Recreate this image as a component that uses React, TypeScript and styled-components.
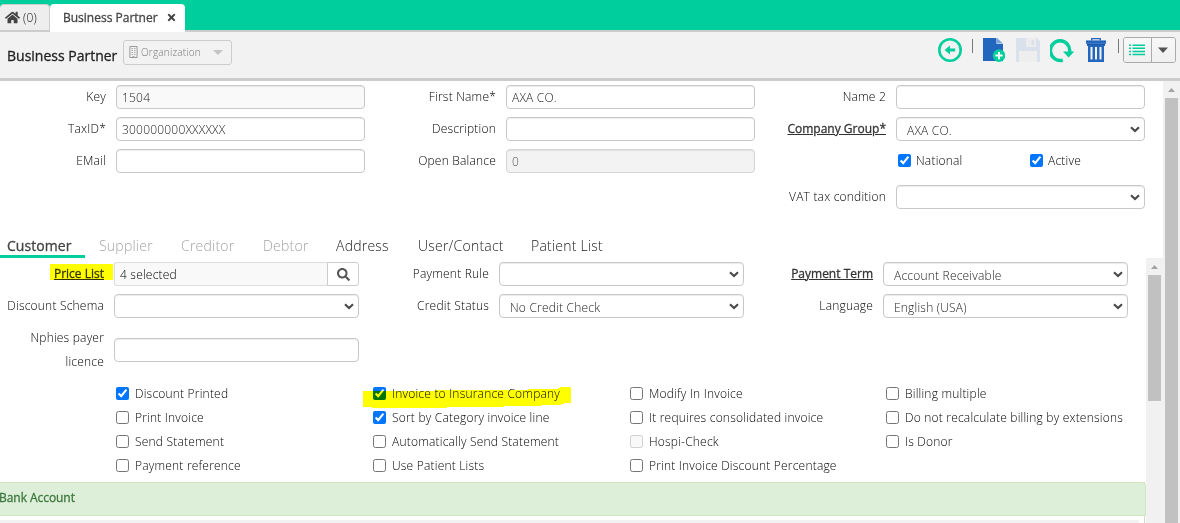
import React from "react";
import styled, { createGlobalStyle, css } from "styled-components";
import { FaHome, FaTimes, FaSearch } from "react-icons/fa";

const Global = createGlobalStyle`
  * { box-sizing: border-box; }
  html, body { margin: 0; padding: 0; height: 100%; overflow: hidden; }
  #root { height: 100%; }
  body, input, select, button {
    font-family: "Open Sans", "Noto Sans", sans-serif;
    font-weight: 300;
    font-size: 12px;
    letter-spacing: 0.2px;
    color: #000;
  }
`;

const heavy = css`
  font-weight: 400;
  -webkit-text-stroke: 0.3px currentColor;
`;

const Page = styled.div`
  display: flex;
  flex-direction: column;
  height: 523px;
  width: 1180px;
  overflow: hidden;
  background: #fff;
`;

/* window tabs */
const TabBar = styled.nav`
  display: flex;
  align-items: flex-end;
  flex: none;
  height: 32px;
  padding-top: 4px;
  background: linear-gradient(#00ce9c 30px, #ccc 30px);
`;

const WindowTab = styled.div<{ $active?: boolean }>`
  display: flex;
  align-items: center;
  border-radius: 4px 4px 0 0;
  white-space: nowrap;
  ${(p) =>
    p.$active
      ? css`
          width: 135px;
          height: 28px;
          padding: 0 8px 1px 13px;
          background: #fff;
          justify-content: space-between;
          ${heavy}
          letter-spacing: 0px;
          color: #444;
        `
      : css`
          width: 50px;
          height: 28px;
          padding: 0 0 1px 5px;
          gap: 3px;
          background: #eee;
          border: 1px solid #ccc;
          border-width: 1px 1px 2px 0;
          color: #111;
        `}
`;

/* header */
const Header = styled.header`
  display: flex;
  flex: none;
  height: 49px;
  padding: 5px 4px 0 7px;
  background: #f2f2f2;
  border-bottom: 3px solid #ccc;
`;

const Title = styled.h1`
  margin: 0;
  width: 116px;
  padding-top: 9px;
  font-size: 14px;
  line-height: 20px;
  ${heavy}
  letter-spacing: 0px;
  color: #222;
  white-space: nowrap;
`;

const OrgSelect = styled.div`
  display: flex;
  align-items: center;
  width: 109px;
  height: 25px;
  margin-top: 3px;
  padding: 0 8px 1px 5px;
  border: 1px solid #ccc;
  border-radius: 3px;
  color: #777;
  font-size: 10px;
  gap: 3px;
`;

const OrgName = styled.span`
  flex: 1;
  letter-spacing: 0.2px;
`;

const Tools = styled.div`
  display: flex;
  align-items: flex-start;
  margin-left: auto;
`;

const Tool = styled.svg<{ $gap: number }>`
  display: block;
  flex: none;
  margin-right: ${(p) => p.$gap}px;
`;

const Divider = styled.span<{ $gap: number }>`
  width: 1px;
  height: 14px;
  margin: 2px ${(p) => p.$gap}px 0 0;
  background: #777;
`;

const ButtonGroup = styled.div`
  display: flex;
  width: 53px;
  height: 26px;
  border: 1px solid #aaa;
  border-radius: 3px;
  overflow: hidden;
`;

const GroupButton = styled.button<{ $width: number }>`
  display: flex;
  align-items: center;
  justify-content: center;
  width: ${(p) => p.$width}px;
  padding: 0;
  border: 0;
  background: linear-gradient(#f8f8f8, #f0f0f0);
  & + & { border-left: 1px solid #aaa; }
`;

/* body */
const Body = styled.div`
  display: flex;
  flex: 1;
  min-height: 0;
`;

const Main = styled.main`
  display: flex;
  flex-direction: column;
  width: 1163px;
  min-height: 0;
`;

const Track = styled.div`
  display: flex;
  flex-direction: column;
  align-items: center;
  flex: none;
  width: 17px;
  background: #f1f1f1;
`;

const Thumb = styled.div<{ $height?: number }>`
  width: 13px;
  background: #c1c1c1;
  ${(p) => (p.$height ? `height: ${p.$height}px;` : "flex: 1;")}
`;

const ArrowUp = styled.svg`
  display: block;
  flex: none;
  width: 17px;
  height: 17px;
`;

const TopForm = styled.section`
  display: flex;
  height: 154px;
  padding-top: 4px;
  flex: none;
`;

const Column = styled.div<{ $width: number }>`
  display: flex;
  flex-direction: column;
  flex: none;
  width: ${(p) => p.$width}px;
`;

const Field = styled.div<{ $height?: number; $label: number }>`
  display: grid;
  grid-template-columns: ${(p) => p.$label}px auto;
  column-gap: 10px;
  justify-content: start;
  align-items: start;
  height: ${(p) => p.$height ?? 32}px;
  flex: none;
`;

const Label = styled.label<{ $link?: boolean }>`
  line-height: 24px;
  text-align: right;
  white-space: nowrap;
  color: #000;
  ${(p) =>
    p.$link &&
    css`
      ${heavy}
      letter-spacing: 0;
      color: #333;
      text-decoration: underline;
    `}
`;

const WrapLabel = styled(Label)`
  white-space: normal;
  padding-left: 20px;
  margin-top: -12px;
`;

const control = css<{ $width: number }>`
  width: ${(p) => p.$width}px;
  height: 24px;
  margin: 0;
  border: 1px solid #c8c8c8;
  border-radius: 4px;
  background-color: #fff;
  box-shadow: inset 0 1px 1px rgba(0, 0, 0, 0.075);
  color: #222;
`;

const Input = styled.input<{ $width: number; $tone?: string }>`
  ${control}
  padding: 1px 5px 0;
  ${(p) => p.$tone && `background-color: ${p.$tone};`}
  &:disabled { color: #555; border-color: #d4d4d4; }
`;

const SelectBox = styled.div`
  display: grid;
  align-items: center;
  height: 24px;
`;

const NativeSelect = styled.select<{ $width: number }>`
  ${control}
  grid-area: 1 / 1;
  appearance: none;
  padding: 3px 24px 0 10px;
`;

const Chevron = styled.svg`
  grid-area: 1 / 1;
  justify-self: end;
  margin-right: 5px;
  pointer-events: none;
`;

const Lookup = styled.div`
  display: flex;
  width: 245px;
  height: 24px;
`;

const LookupValue = styled.div`
  flex: 1;
  padding-left: 5px;
  line-height: 24px;
  border: 1px solid #ddd;
  border-right: 0;
  border-radius: 3px 0 0 3px;
  background: #f9f9f9;
  color: #000;
`;

const LookupButton = styled.button`
  display: flex;
  align-items: center;
  justify-content: center;
  width: 32px;
  padding: 0;
  border: 1px solid #ccc;
  border-radius: 0 3px 3px 0;
  background: #fff;
`;

const CheckLine = styled.div`
  display: flex;
  gap: 0;
  height: 36px;
  padding-left: 118px;
`;

const CheckItem = styled.label<{ $width?: number; $gap: number }>`
  display: flex;
  align-items: flex-start;
  flex: none;
  gap: ${(p) => p.$gap}px;
  width: ${(p) => (p.$width ? p.$width + "px" : "auto")};
  height: 24px;
  line-height: 24px;
  white-space: nowrap;
  input { margin: 5px 0 0; width: 13px; height: 13px; flex: none; }
`;

/* section tabs */
const SectionTabs = styled.div`
  display: flex;
  flex: none;
  height: 23px;
`;

const SectionTab = styled.span<{ $width: number; $active?: boolean; $off?: boolean }>`
  width: ${(p) => p.$width}px;
  padding-left: 7px;
  height: 23px;
  font-size: 14px;
  line-height: 21px;
  letter-spacing: 0.22px;
  white-space: nowrap;
  color: ${(p) => (p.$off ? "#a4a4a4" : "#222")};
  ${(p) =>
    p.$active &&
    css`
      ${heavy}
      color: #444;
      letter-spacing: 0.05px;
      border-bottom: 3px solid #00ce9c;
    `}
`;

const Panel = styled.div`
  display: flex;
  flex: 1;
  min-height: 0;
`;

const PanelContent = styled.div`
  display: flex;
  flex-direction: column;
  width: 1146px;
  flex: none;
`;

const PanelForm = styled.section`
  display: flex;
  flex: none;
  height: 124px;
  padding-top: 4px;
`;

const Checks = styled.section`
  position: relative;
  display: grid;
  grid-template-columns: 257px 257px 256px 1fr;
  grid-auto-rows: 24px;
  height: 100px;
  padding-left: 116px;
  flex: none;
`;

const Mark = styled.svg<{ $x: number; $y: number }>`
  position: absolute;
  left: ${(p) => p.$x}px;
  top: ${(p) => p.$y}px;
  mix-blend-mode: multiply;
  pointer-events: none;
`;

const Highlight = styled.span`
  display: block;
  position: relative;
`;

const Account = styled.section`
  flex: 1;
  margin-right: 1px;
  border-right: 1px solid #cfdcc8;
  min-height: 0;
`;

const AccountHead = styled.h2`
  margin: 0 -2px 4px -2px;
  height: 34px;
  padding-bottom: 2px;
  border: 1px solid #d0e6c0;
  border-radius: 0 4px 0 0;
  background: #ddefd8;
  font-size: 12px;
  ${heavy}
  line-height: 30px;
  letter-spacing: -0.05px;
  color: #3c763d;
`;

const AccountBar = styled.div`
  height: 10px;
  margin-right: 5px;
  background: #f2f2f2;
`;

function ScrollBar({ thumb }: { thumb?: number }) {
  return (
    <Track>
      <ArrowUp viewBox="0 0 17 17">
        <path d="M5 11 8.5 7 12 11Z" fill="#a3a3a3" />
      </ArrowUp>
      <Thumb $height={thumb} />
    </Track>
  );
}

function TextField(p: {
  label: string;
  value?: string;
  tone?: string;
  disabled?: boolean;
}) {
  return (
    <Field $label={106}>
      <Label>{p.label}</Label>
      <Input $width={249} $tone={p.tone} defaultValue={p.value} disabled={p.disabled} />
    </Field>
  );
}

function Select({ width, value }: { width: number; value?: string }) {
  return (
    <SelectBox>
      <NativeSelect $width={width}>
        <option>{value ?? ""}</option>
      </NativeSelect>
      <Chevron width="10" height="7" viewBox="0 0 10 7">
        <path d="M1 1.2 5 5.1 9 1.2" fill="none" stroke="#484848" strokeWidth="2.1" />
      </Chevron>
    </SelectBox>
  );
}

function SelectField(p: {
  label: string;
  value?: string;
  link?: boolean;
  width?: number;
  labelWidth: number;
}) {
  return (
    <Field $label={p.labelWidth}>
      <Label $link={p.link}>{p.label}</Label>
      <Select width={p.width ?? 245} value={p.value} />
    </Field>
  );
}

function Check(p: { text: string; on?: boolean; off?: boolean; width?: number; gap?: number }) {
  return (
    <CheckItem $width={p.width} $gap={p.gap ?? 6}>
      <input type="checkbox" defaultChecked={p.on} disabled={p.off} />
      <span>{p.text}</span>
    </CheckItem>
  );
}

const OPTIONS: { text: string; on?: boolean; off?: boolean }[] = [
  { text: "Discount Printed", on: true },
  { text: "Invoice to Insurance Company", on: true },
  { text: "Modify In Invoice" },
  { text: "Billing multiple" },
  { text: "Print Invoice" },
  { text: "Sort by Category invoice line", on: true },
  { text: "It requires consolidated invoice" },
  { text: "Do not recalculate billing by extensions" },
  { text: "Send Statement" },
  { text: "Automatically Send Statement" },
  { text: "Hospi-Check", off: true },
  { text: "Is Donor" },
  { text: "Payment reference" },
  { text: "Use Patient Lists" },
  { text: "Print Invoice Discount Percentage" },
];

function Toolbar() {
  return (
    <Tools>
      <Tool $gap={10} width="24" height="26" viewBox="0 0 24 26">
        <circle cx="12" cy="13" r="10.7" fill="none" stroke="#00ce9c" strokeWidth="2.6" />
        <path d="M6.5 13 12 8.6V11.5H17.2V14.5H12V17.4Z" fill="#00ce9c" />
      </Tool>
      <Divider $gap={10} />
      <Tool $gap={11} width="22" height="26" viewBox="0 0 22 26">
        <path d="M0 1H13.5V7H20V24H0Z" fill="#2366bd" />
        <path d="M14 1 20 6.6H14Z" fill="#7ba4dc" />
        <circle cx="16" cy="18.6" r="6.3" fill="#00ce9c" />
        <path d="M16 15V22.2M12.4 18.6H19.6" stroke="#fff" strokeWidth="2" />
      </Tool>
      <Tool $gap={10} width="24" height="26" viewBox="0 0 24 26">
        <path d="M0 1H21L24 4V25H0Z" fill="#d9e1ec" />
        <path d="M10 1H20V10H10Z" fill="#ececec" />
        <path d="M15.5 3H18V8H15.5Z" fill="#d9e1ec" />
        <path d="M3 14H21V25H3Z" fill="#eee" />
      </Tool>
      <Tool $gap={12} width="24" height="26" viewBox="0 0 24 26">
        <path d="M12.8 23.1A9.6 9.9 0 1 1 19.6 15" fill="none" stroke="#00ce9c" strokeWidth="3.4" />
        <path d="M13 14.5H24.2L18.6 20.5Z" fill="#00ce9c" />
      </Tool>
      <Tool $gap={12} width="20" height="26" viewBox="0 0 20 26">
        <path d="M5.8 3.5V1.6H14.2V3.5" fill="none" stroke="#2366bd" strokeWidth="1.4" />
        <path d="M0 3.4H20V6.8H0Z" fill="#2366bd" />
        <path d="M1 6.8H19V9H18V25H2V9H1Z" fill="#2366bd" />
        <path d="M1 7.5H19" stroke="#1b56a5" />
        <path d="M5.5 10V22.5M10 10V22.5M14.5 10V22.5" stroke="#f2f2f2" strokeWidth="2" />
      </Tool>
      <Divider $gap={4} />
      <ButtonGroup>
        <GroupButton $width={28}>
          <svg width="16" height="12" viewBox="0 0 16 12">
            <path
              d="M0 1.2H2M3.5 1.2H16M0 4.3H2M3.5 4.3H16M0 7.4H2M3.5 7.4H16M0 10.5H2M3.5 10.5H16"
              stroke="#00ce9c"
              strokeWidth="1.5"
            />
          </svg>
        </GroupButton>
        <GroupButton $width={25}>
          <svg width="10" height="6" viewBox="0 0 10 6">
            <path d="M0 .5H10L5 6Z" fill="#555" />
          </svg>
        </GroupButton>
      </ButtonGroup>
    </Tools>
  );
}

export default function App() {
  return (
    <Page>
      <Global />
      <TabBar>
        <WindowTab>
          <FaHome size={15} color="#444" />
          <span>(0)</span>
        </WindowTab>
        <WindowTab $active>
          <span>Business Partner</span>
          <FaTimes size={11} color="#444" />
        </WindowTab>
      </TabBar>
      <Header>
        <Title>Business Partner</Title>
        <OrgSelect>
          <svg width="9" height="12" viewBox="0 0 9 12">
            <path d="M.9 .5H8.1V11.5H.9Z" fill="none" stroke="#999" />
            <path
              d="M2.5 2.5H4M5 2.5H6.5M2.5 4.5H4M5 4.5H6.5M2.5 6.5H4M5 6.5H6.5M2.5 8.5H4M5 8.5H6.5M3.5 10.5H5.5"
              stroke="#aaa"
            />
          </svg>
          <OrgName>Organization</OrgName>
          <svg width="10" height="5" viewBox="0 0 10 5">
            <path d="M0 0H10L5 5Z" fill="#c4c4c4" />
          </svg>
        </OrgSelect>
        <Toolbar />
      </Header>
      <Body>
        <Main>
          <TopForm>
            <Column $width={390}>
              <TextField label="Key" value="1504" tone="#f9f9f9" />
              <TextField label="TaxID*" value="300000000XXXXXX" />
              <TextField label="EMail" />
            </Column>
            <Column $width={390}>
              <TextField label="First Name*" value="AXA CO." />
              <TextField label="Description" />
              <TextField label="Open Balance" value="0" tone="#f3f3f3" disabled />
            </Column>
            <Column $width={383}>
              <TextField label="Name 2" />
              <SelectField label="Company Group*" value="AXA CO." link labelWidth={106} width={249} />
              <CheckLine>
                <Check text="National" on width={132} gap={5} />
                <Check text="Active" on gap={5} />
              </CheckLine>
              <SelectField label="VAT tax condition" labelWidth={106} width={249} />
            </Column>
          </TopForm>
          <SectionTabs>
            <SectionTab $width={85} $active>Customer</SectionTab>
            <SectionTab $width={7} />
            <SectionTab $width={82} $off>Supplier</SectionTab>
            <SectionTab $width={82} $off>Creditor</SectionTab>
            <SectionTab $width={73} $off>Debtor</SectionTab>
            <SectionTab $width={82}>Address</SectionTab>
            <SectionTab $width={113}>User/Contact</SectionTab>
            <SectionTab $width={100}>Patient List</SectionTab>
          </SectionTabs>
          <Panel>
            <PanelContent>
              <PanelForm>
                <Column $width={384}>
                  <Field $label={104}>
                    <Highlight>
                      <Label as="div" $link>Price List</Label>
                      <Mark $x={50} $y={2} width="63" height="16">
                        <rect width="63" height="16" fill="#ff0" />
                      </Mark>
                    </Highlight>
                    <Lookup>
                      <LookupValue>4 selected</LookupValue>
                      <LookupButton>
                        <FaSearch size={13} color="#555" />
                      </LookupButton>
                    </Lookup>
                  </Field>
                  <Field $label={104} $height={44}>
                    <Label>Discount Schema</Label>
                    <Select width={245} />
                  </Field>
                  <Field $label={104}>
                    <WrapLabel>Nphies payer licence</WrapLabel>
                    <Input $width={245} />
                  </Field>
                </Column>
                <Column $width={384}>
                  <SelectField label="Payment Rule" labelWidth={105} />
                  <SelectField label="Credit Status" value="No Credit Check" labelWidth={105} />
                </Column>
                <Column $width={378}>
                  <SelectField label="Payment Term" value="Account Receivable" link labelWidth={105} />
                  <SelectField label="Language" value="English (USA)" labelWidth={105} />
                </Column>
              </PanelForm>
              <Checks>
                {OPTIONS.map((o) => (
                  <Check key={o.text} {...o} />
                ))}
                <Mark $x={363} $y={5} width="208" height="22">
                  <path
                    d="M0 4H72V3H165V2H195V1H197V0H207L208 1V16H201V17H198V18H178V19H141V20H84V21H9V20H0Z"
                    fill="#ff0"
                  />
                </Mark>
              </Checks>
              <Account>
                <AccountHead>Bank Account</AccountHead>
                <AccountBar />
              </Account>
            </PanelContent>
            <ScrollBar thumb={126} />
          </Panel>
        </Main>
        <ScrollBar />
      </Body>
    </Page>
  );
}
